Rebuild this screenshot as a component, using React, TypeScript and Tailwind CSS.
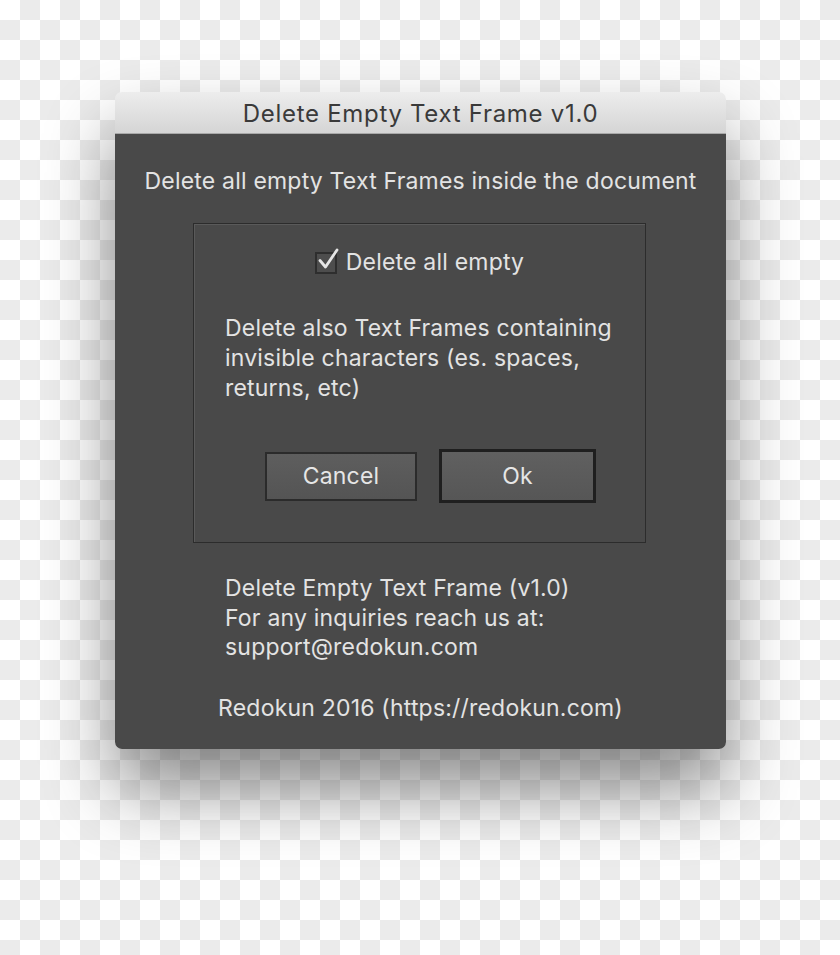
export default function App() {
  const font = { fontFamily: 'Inter, "Noto Sans", sans-serif' };

  return (
    <div
      className="w-[840px] h-[955px] overflow-hidden bg-[repeating-conic-gradient(#ebebeb_0%_25%,#ffffff_0%_50%)] bg-[length:40px_40px] pt-[92px] pl-[115px]"
      style={font}
    >
      {/* Dialog window */}
      <div className="w-[611px] rounded-[7px] shadow-[0_40px_70px_rgba(0,0,0,0.45)]">
        {/* Title bar */}
        <div className="h-[42px] pt-[3px] rounded-t-[7px] bg-gradient-to-b from-[#ededed] to-[#d5d5d5] border-b border-[#a9a9a9] flex items-center justify-center">
          <span className="text-[24px] text-[#3a3a3a] leading-none tracking-[0.7px]">Delete Empty Text Frame v1.0</span>
        </div>

        {/* Body */}
        <div className="bg-[#494949] rounded-b-[7px] pt-[32px] pb-[26px] flex flex-col text-[#e3e3e3] text-[23px] tracking-[0.2px]">
          <p className="leading-[30px] text-center">Delete all empty Text Frames inside the document</p>

          {/* Options panel */}
          <div className="mt-[27px] ml-[78px] w-[453px] h-[320px] border border-[#2c2c2c] shadow-[inset_1px_1px_0_#5a5a5a] pt-[23px] flex flex-col">
            <label className="flex items-center justify-center gap-[9px] h-[30px]">
              <span className="relative w-[22px] h-[22px] border-2 border-[#2e2e2e] bg-[#4d4d4d] mt-[2px]">
                <svg viewBox="0 0 24 24" className="absolute -top-[6px] -left-[1px] w-[24px] h-[24px]">
                  <path d="M4 12.5 L9.5 19 L21 2" fill="none" stroke="#e6e6e6" strokeWidth="2.8" strokeLinecap="round" strokeLinejoin="round" />
                </svg>
              </span>
              <span className="leading-[30px]">Delete all empty</span>
            </label>

            <p className="mt-[36px] pl-[31px] pr-[20px] leading-[30px]">
              Delete also Text Frames containing invisible characters (es. spaces, returns, etc)
            </p>

            <div className="mt-[46px] flex items-center pl-[71px] gap-[22px]">
              <button className="w-[152px] h-[49px] border-2 border-[#2b2b2b] bg-gradient-to-b from-[#5e5e5e] to-[#545454] text-[#e6e6e6] tracking-[0.2px]">
                Cancel
              </button>
              <button className="w-[157px] h-[54px] border-[3px] border-[#1f1f1f] bg-gradient-to-b from-[#606060] to-[#565656] text-[#e6e6e6] tracking-[0.2px]">
                Ok
              </button>
            </div>
          </div>

          {/* Footer */}
          <div className="mt-[31px] pl-[110px] leading-[29.5px]">
            <p>Delete Empty Text Frame (v1.0)</p>
            <p>For any inquiries reach us at:</p>
            <p>support@redokun.com</p>
          </div>

          <p className="mt-[30px] text-center leading-[30px]">Redokun 2016 (https://redokun.com)</p>
        </div>
      </div>
    </div>
  );
}
